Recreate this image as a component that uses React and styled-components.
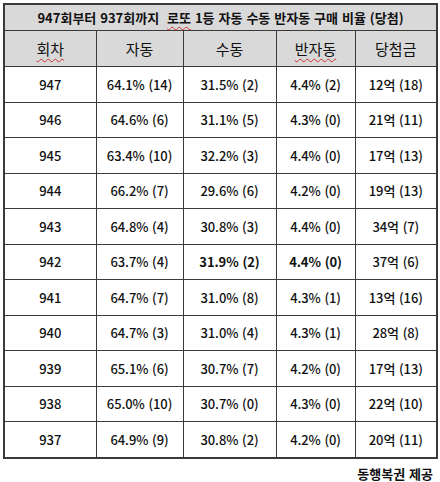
import React from "react";
import styled, { createGlobalStyle } from "styled-components";

const rows = [
  ["947", "64.1% (14)", "31.5% (2)", "4.4% (2)", "12억 (18)"],
  ["946", "64.6% (6)", "31.1% (5)", "4.3% (0)", "21억 (11)"],
  ["945", "63.4% (10)", "32.2% (3)", "4.4% (0)", "17억 (13)"],
  ["944", "66.2% (7)", "29.6% (6)", "4.2% (0)", "19억 (13)"],
  ["943", "64.8% (4)", "30.8% (3)", "4.4% (0)", "34억 (7)"],
  ["942", "63.7% (4)", "31.9% (2)", "4.4% (0)", "37억 (6)", true],
  ["941", "64.7% (7)", "31.0% (8)", "4.3% (1)", "13억 (16)"],
  ["940", "64.7% (3)", "31.0% (4)", "4.3% (1)", "28억 (8)"],
  ["939", "65.1% (6)", "30.7% (7)", "4.2% (0)", "17억 (13)"],
  ["938", "65.0% (10)", "30.7% (0)", "4.3% (0)", "22억 (10)"],
  ["937", "64.9% (9)", "30.8% (2)", "4.2% (0)", "20억 (11)"],
];

const widths = [92, 87, 93, 79, 82];

const GlobalStyle = createGlobalStyle`
  body {
    margin: 0;
    background: #fff;
    font-family: "Noto Sans CJK KR", "Noto Sans", sans-serif;
    color: #111;
  }
`;

const Page = styled.div`
  width: 440px;
  padding: 3px 4px 0 3px;
  box-sizing: border-box;
`;

const Table = styled.table`
  width: 433px;
  border-collapse: collapse;
  table-layout: fixed;
  border: 2px solid #3a3a3a;
`;

const TitleCell = styled.th`
  height: 25px;
  padding: 0;
  background: #d9d9d9;
  border: 1px solid #3a3a3a;
  font-size: 13px;
  font-weight: 700;
  text-align: center;
  word-spacing: 1px;
`;

const HeadCell = styled.th`
  height: 35px;
  padding: 0;
  background: #d9d9d9;
  border: 1px solid #3a3a3a;
  font-size: 15px;
  font-weight: 400;
  text-align: center;
`;

const Cell = styled.td`
  height: 34.5px;
  padding: 0;
  border: 1px solid #3a3a3a;
  font-size: 13px;
  font-weight: ${(p) => (p.$bold ? 700 : 500)};
  text-align: center;
  letter-spacing: -0.1px;
  word-spacing: 1px;
  white-space: nowrap;
`;

const Squiggle = styled.span`
  text-decoration: underline wavy #d03030;
  text-decoration-thickness: 1px;
  text-underline-offset: 3px;
`;

const Credit = styled.div`
  text-align: right;
  padding: 5px 3px 0 0;
  font-size: 13px;
  font-weight: 700;
  word-spacing: 1px;
`;

export default function App() {
  return (
    <Page>
      <GlobalStyle />
      <Table>
        <colgroup>
          {widths.map((w, i) => (
            <col key={i} style={{ width: w }} />
          ))}
        </colgroup>
        <thead>
          <tr>
            <TitleCell colSpan={5}>
              947회부터 937회까지&nbsp; <Squiggle>로또</Squiggle> 1등 자동 수동 반자동 구매 비율 (당첨)
            </TitleCell>
          </tr>
          <tr>
            <HeadCell>
              <Squiggle>회차</Squiggle>
            </HeadCell>
            <HeadCell>자동</HeadCell>
            <HeadCell>수동</HeadCell>
            <HeadCell>
              <Squiggle>반자동</Squiggle>
            </HeadCell>
            <HeadCell>당첨금</HeadCell>
          </tr>
        </thead>
        <tbody>
          {rows.map((r) => (
            <tr key={r[0]}>
              <Cell>{r[0]}</Cell>
              <Cell>{r[1]}</Cell>
              <Cell $bold={r[5]}>{r[2]}</Cell>
              <Cell $bold={r[5]}>{r[3]}</Cell>
              <Cell>{r[4]}</Cell>
            </tr>
          ))}
        </tbody>
      </Table>
      <Credit>동행복권 제공</Credit>
    </Page>
  );
}
